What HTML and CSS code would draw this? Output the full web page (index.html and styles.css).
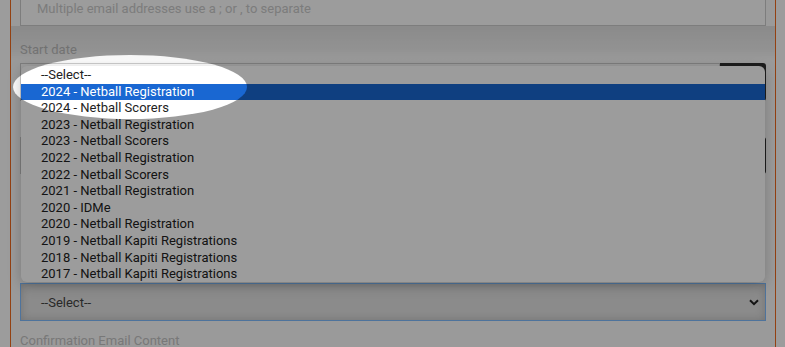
FILE: index.html
```html
<!DOCTYPE html>
<html>
<head>
<meta charset="utf-8">
<link rel="stylesheet" href="styles.css">
</head>
<body>
<div class="frame">
  <div class="input email">Multiple email addresses use a ; or , to separate</div>
  <label class="lbl">Start date</label>
  <div class="date-row"><div class="input grow"></div><div class="cal-btn"></div></div>
  <div class="date-row second"><div class="input grow"></div><div class="cal-btn"></div></div>
  <div class="select focus"><span>--Select--</span>
    <svg class="chev" width="10" height="7" viewBox="0 0 10 7"><path d="M1 1.2 L5 5.2 L9 1.2" fill="none" stroke="#222" stroke-width="2"/></svg>
  </div>
  <label class="lbl lbl-last">Confirmation Email Content</label>
</div>

<div class="band"></div>

<ul class="popup">
  <li>--Select--</li>
  <li class="sel">2024 - Netball Registration</li>
  <li>2024 - Netball Scorers</li>
  <li>2023 - Netball Registration</li>
  <li>2023 - Netball Scorers</li>
  <li>2022 - Netball Registration</li>
  <li>2022 - Netball Scorers</li>
  <li>2021 - Netball Registration</li>
  <li>2020 - IDMe</li>
  <li>2020 - Netball Registration</li>
  <li>2019 - Netball Kapiti Registrations</li>
  <li>2018 - Netball Kapiti Registrations</li>
  <li>2017 - Netball Kapiti Registrations</li>
</ul>

<div class="spotlight"></div>
</body>
</html>
```

FILE: styles.css
```css
html, body {
  margin: 0;
  padding: 0;
}
body {
  width: 785px;
  height: 347px;
  overflow: hidden;
  position: relative;
  background: #ffffff;
  font-family: Roboto, "Liberation Sans", Arial, sans-serif;
  font-size: 13px;
  color: #333;
}
.frame {
  margin: 0 9px 0 10px;
  height: 347px;
  box-sizing: border-box;
  border-left: 1px solid #f06a1e;
  border-right: 1px solid #f06a1e;
  background: #fcfcfc;
  padding: 0 9px 0 9px;
  display: flex;
  flex-direction: column;
}
.input {
  box-sizing: border-box;
  height: 38px;
  border: 1px solid #cdcdcd;
  background: #fff;
}
.email {
  flex: none;
  height: 40px;
  margin-top: -14px;
  padding: 12px 16px 0;
  line-height: 20px;
  color: #cbcbcb;
}
.lbl {
  display: block;
  flex: none;
  line-height: 18px;
  margin-top: 15px;
  margin-bottom: 4px;
  color: #c4c4c4;
}
.date-row {
  flex: none;
  display: flex;
  height: 38px;
}
.date-row.second {
  margin-top: 36px;
  height: 37px;
}
.grow {
  flex: 1;
  height: auto;
}
.cal-btn {
  width: 46px;
  background: #313131;
  border-radius: 0 3px 3px 0;
}
.select {
  flex: none;
  box-sizing: border-box;
  height: 38px;
  margin-top: 109px;
  border: 1px solid #80bdff;
  background: #e3e3e3;
  display: flex;
  align-items: center;
  justify-content: space-between;
  padding: 0 6px 0 20px;
  color: #444;
}
.select.focus {
  box-shadow: 0 0 8px rgba(0,0,0,.18) inset;
}
.chev {
  display: block;
}
.lbl-last {
  margin-top: 11px;
  color: #c4c4c4;
}
.band {
  position: absolute;
  left: 11px;
  top: 26px;
  width: 764px;
  height: 34px;
  background: linear-gradient(to bottom, rgba(0,0,0,.1), rgba(0,0,0,.05) 70%, rgba(0,0,0,0));
}
.popup {
  position: absolute;
  left: 21px;
  top: 66px;
  width: 744px;
  height: 216px;
  box-sizing: border-box;
  margin: 0;
  padding: 1px 0 0;
  list-style: none;
  background: #fff;
  border-radius: 6px;
  box-shadow: 0 3px 14px rgba(0,0,0,.22);
  color: #222;
  overflow: hidden;
}
.popup li {
  height: 16.6px;
  line-height: 16.6px;
  padding-left: 20px;
  white-space: nowrap;
}
.popup li.sel {
  background: #1967d2;
  color: #fff;
}
.spotlight {
  position: absolute;
  left: 13px;
  top: 55px;
  width: 234px;
  height: 64px;
  border-radius: 50%;
  box-shadow: 0 0 3px 1200px rgba(0,0,0,.388);
  pointer-events: none;
}
```
